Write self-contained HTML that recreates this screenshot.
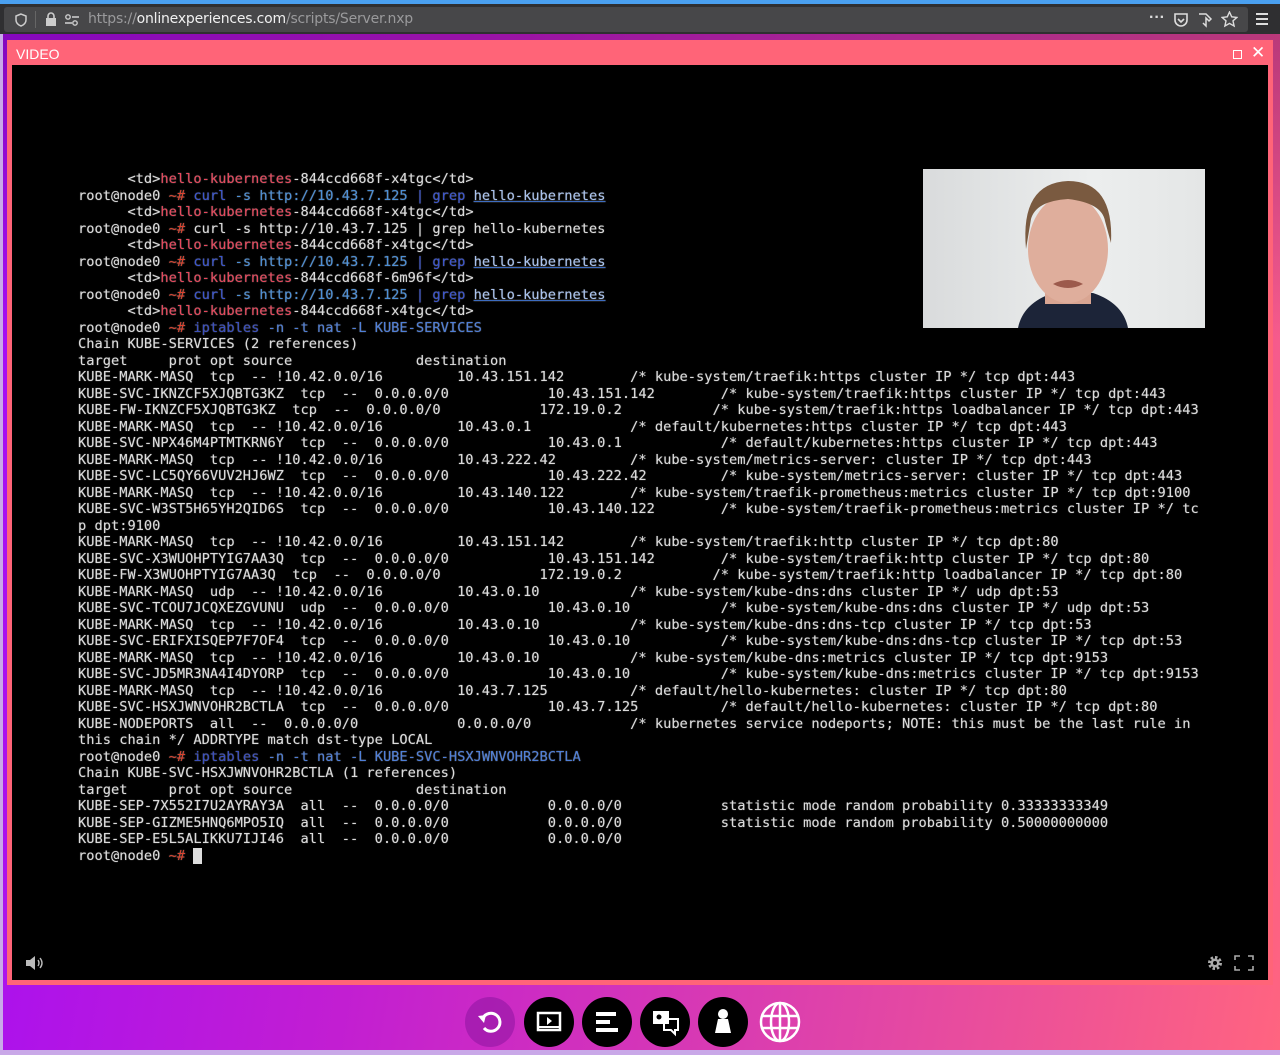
<!DOCTYPE html>
<html><head><meta charset="utf-8"><style>
*{margin:0;padding:0;box-sizing:border-box}
body{width:1280px;height:1055px;overflow:hidden;position:relative;background:#c9a8e8;font-family:"Liberation Sans","DejaVu Sans",sans-serif}
#top{position:absolute;left:0;top:0;width:1280px;height:4px;background:#4aa0f0}
#bar{position:absolute;left:0;top:4px;width:1280px;height:30px;background:#2f2f31}
#url{position:absolute;left:4px;top:3px;width:1244px;height:25px;background:#474749;border-radius:3px}
#url .t{position:absolute;left:84px;top:4px;font-size:14px;color:#9a9a9c;font-family:"DejaVu Sans",sans-serif;letter-spacing:-0.2px}
#url .t b{font-weight:normal;color:#f0f0f0}
#bg{position:absolute;left:3px;top:34px;width:1277px;height:1016px;background:linear-gradient(100deg,#a20cf8 0%,#c21ed2 35%,#e044a8 70%,#ff6480 100%)}
#bgshade{position:absolute;left:3px;top:34px;width:1277px;height:1016px;background:linear-gradient(180deg,rgba(80,0,80,0.35) 0%,rgba(0,0,0,0) 30%)}
#panel{position:absolute;left:7px;top:40px;width:1266px;height:945px;background:#ff6478}
#panel .h{position:absolute;left:9px;top:6px;color:#fff;font-size:14px}
#video{position:absolute;left:12px;top:65px;width:1256px;height:915px;background:#000}
pre{position:absolute;left:78px;top:171px;font-family:"DejaVu Sans Mono","Liberation Mono",monospace;font-size:13.7px;line-height:16.5px;color:#dcdcdc;text-shadow:0 0 1px rgba(220,220,220,.6)}
.r{color:#e8475c}.o{color:#d9432f}.b{color:#3a55d0}.c{color:#4c8fd6}.u{color:#a9c3ef;text-decoration:underline;text-decoration-color:#3d6cc0}
.d{color:#3a4fc0}.l{color:#4f7fd8}
#cam{position:absolute;left:923px;top:169px;width:282px;height:159px;background:linear-gradient(90deg,#d9dbdc,#eceeee 60%,#e4e6e6);overflow:hidden}
.icon{position:absolute;top:997px;width:50px;height:50px;border-radius:50%;background:#000}
</style></head><body>
<div id="top"></div>
<div id="bar"><div id="url">
<svg style="position:absolute;left:10px;top:6px" width="14" height="14" viewBox="0 0 14 14"><path d="M7 1L2 3v4c0 3 2.5 5 5 6 2.5-1 5-3 5-6V3z" fill="none" stroke="#ccc" stroke-width="1.5"/></svg>
<div style="position:absolute;left:31px;top:4px;width:1px;height:17px;background:#666"></div>
<svg style="position:absolute;left:41px;top:5px" width="12" height="15" viewBox="0 0 12 15"><rect x="1" y="6" width="10" height="8" fill="#ccc"/><path d="M3 6V4a3 3 0 016 0v2" fill="none" stroke="#ccc" stroke-width="1.6"/></svg>
<svg style="position:absolute;left:60px;top:6px" width="16" height="14" viewBox="0 0 16 14"><circle cx="4" cy="4" r="2.2" fill="none" stroke="#ccc" stroke-width="1.4"/><line x1="8" y1="4" x2="15" y2="4" stroke="#ccc" stroke-width="1.6"/><circle cx="11" cy="10" r="2.2" fill="none" stroke="#ccc" stroke-width="1.4"/><line x1="1" y1="10" x2="8" y2="10" stroke="#ccc" stroke-width="1.6"/></svg>
<div class="t">https://<b>onlinexperiences.com</b>/scripts/Server.nxp</div>
<div style="position:absolute;left:1145px;top:2px;color:#ddd;font-size:16px;font-weight:bold">···</div>
<svg style="position:absolute;left:1169px;top:5px" width="16" height="16" viewBox="0 0 16 16"><path d="M2 2h12v6a6 6 0 01-12 0z" fill="none" stroke="#ddd" stroke-width="1.6"/><path d="M5 7l3 3 3-3" fill="none" stroke="#ddd" stroke-width="1.6"/></svg>
<svg style="position:absolute;left:1193px;top:5px" width="16" height="16" viewBox="0 0 16 16"><path d="M2 2h7l5 5-2 2-3-3v8l-3-3" fill="none" stroke="#ddd" stroke-width="1.5"/></svg>
<svg style="position:absolute;left:1217px;top:4px" width="17" height="17" viewBox="0 0 17 17"><path d="M8.5 1l2.2 4.8 5.2.6-3.9 3.5 1.1 5.1-4.6-2.6-4.6 2.6 1.1-5.1L1.1 6.4l5.2-.6z" fill="none" stroke="#ddd" stroke-width="1.4"/></svg>
</div>
<div style="position:absolute;left:1256px;top:9px;width:12px;height:2px;background:#ddd;box-shadow:0 5px 0 #ddd,0 10px 0 #ddd"></div>
</div>
<div id="bg"></div><div id="bgshade"></div>
<div id="panel"><div class="h">VIDEO</div>
<div style="position:absolute;left:1226px;top:10px;width:9px;height:9px;border:1.5px solid #fff"></div>
<div style="position:absolute;left:1244px;top:3px;color:#fff;font-size:17px">✕</div>
</div>
<div id="video">
<svg style="position:absolute;left:13px;top:890px" width="20" height="16" viewBox="0 0 20 16"><path d="M1 5h4l5-4v14l-5-4H1z" fill="#bbb"/><path d="M13 5q2 3 0 6M15 3q4 5 0 10" fill="none" stroke="#bbb" stroke-width="1.4"/></svg>
<svg style="position:absolute;left:1194px;top:889px" width="18" height="18" viewBox="0 0 18 18"><circle cx="9" cy="9" r="5" fill="none" stroke="#aaa" stroke-width="4" stroke-dasharray="2.2 1.7"/><circle cx="9" cy="9" r="4.5" fill="#aaa"/><circle cx="9" cy="9" r="2" fill="#000"/></svg>
<svg style="position:absolute;left:1222px;top:890px" width="20" height="16" viewBox="0 0 20 16"><path d="M1 5V1h5M14 1h5v4M19 11v4h-5M6 15H1v-4" fill="none" stroke="#aaa" stroke-width="1.6"/></svg>
</div>
<pre>      &lt;td&gt;<span class="r">hello-kubernetes</span>-844ccd668f-x4tgc&lt;/td&gt;
root@node0 <span class="o">~#</span> <span class="b">curl</span> <span class="c">-s http://10.43.7.125</span> <span class="b">| grep</span> <span class="u">hello-kubernetes</span>
      &lt;td&gt;<span class="r">hello-kubernetes</span>-844ccd668f-x4tgc&lt;/td&gt;
root@node0 <span class="o">~#</span> curl -s http://10.43.7.125 | grep hello-kubernetes
      &lt;td&gt;<span class="r">hello-kubernetes</span>-844ccd668f-x4tgc&lt;/td&gt;
root@node0 <span class="o">~#</span> <span class="b">curl</span> <span class="c">-s http://10.43.7.125</span> <span class="b">| grep</span> <span class="u">hello-kubernetes</span>
      &lt;td&gt;<span class="r">hello-kubernetes</span>-844ccd668f-6m96f&lt;/td&gt;
root@node0 <span class="o">~#</span> <span class="b">curl</span> <span class="c">-s http://10.43.7.125</span> <span class="b">| grep</span> <span class="u">hello-kubernetes</span>
      &lt;td&gt;<span class="r">hello-kubernetes</span>-844ccd668f-x4tgc&lt;/td&gt;
root@node0 <span class="o">~#</span> <span class="d">iptables</span> <span class="l">-n -t nat -L KUBE-SERVICES</span>
Chain KUBE-SERVICES (2 references)
target     prot opt source               destination
KUBE-MARK-MASQ  tcp  -- !10.42.0.0/16         10.43.151.142        /* kube-system/traefik:https cluster IP */ tcp dpt:443
KUBE-SVC-IKNZCF5XJQBTG3KZ  tcp  --  0.0.0.0/0            10.43.151.142        /* kube-system/traefik:https cluster IP */ tcp dpt:443
KUBE-FW-IKNZCF5XJQBTG3KZ  tcp  --  0.0.0.0/0            172.19.0.2           /* kube-system/traefik:https loadbalancer IP */ tcp dpt:443
KUBE-MARK-MASQ  tcp  -- !10.42.0.0/16         10.43.0.1            /* default/kubernetes:https cluster IP */ tcp dpt:443
KUBE-SVC-NPX46M4PTMTKRN6Y  tcp  --  0.0.0.0/0            10.43.0.1            /* default/kubernetes:https cluster IP */ tcp dpt:443
KUBE-MARK-MASQ  tcp  -- !10.42.0.0/16         10.43.222.42         /* kube-system/metrics-server: cluster IP */ tcp dpt:443
KUBE-SVC-LC5QY66VUV2HJ6WZ  tcp  --  0.0.0.0/0            10.43.222.42         /* kube-system/metrics-server: cluster IP */ tcp dpt:443
KUBE-MARK-MASQ  tcp  -- !10.42.0.0/16         10.43.140.122        /* kube-system/traefik-prometheus:metrics cluster IP */ tcp dpt:9100
KUBE-SVC-W3ST5H65YH2QID6S  tcp  --  0.0.0.0/0            10.43.140.122        /* kube-system/traefik-prometheus:metrics cluster IP */ tc
p dpt:9100
KUBE-MARK-MASQ  tcp  -- !10.42.0.0/16         10.43.151.142        /* kube-system/traefik:http cluster IP */ tcp dpt:80
KUBE-SVC-X3WUOHPTYIG7AA3Q  tcp  --  0.0.0.0/0            10.43.151.142        /* kube-system/traefik:http cluster IP */ tcp dpt:80
KUBE-FW-X3WUOHPTYIG7AA3Q  tcp  --  0.0.0.0/0            172.19.0.2           /* kube-system/traefik:http loadbalancer IP */ tcp dpt:80
KUBE-MARK-MASQ  udp  -- !10.42.0.0/16         10.43.0.10           /* kube-system/kube-dns:dns cluster IP */ udp dpt:53
KUBE-SVC-TCOU7JCQXEZGVUNU  udp  --  0.0.0.0/0            10.43.0.10           /* kube-system/kube-dns:dns cluster IP */ udp dpt:53
KUBE-MARK-MASQ  tcp  -- !10.42.0.0/16         10.43.0.10           /* kube-system/kube-dns:dns-tcp cluster IP */ tcp dpt:53
KUBE-SVC-ERIFXISQEP7F7OF4  tcp  --  0.0.0.0/0            10.43.0.10           /* kube-system/kube-dns:dns-tcp cluster IP */ tcp dpt:53
KUBE-MARK-MASQ  tcp  -- !10.42.0.0/16         10.43.0.10           /* kube-system/kube-dns:metrics cluster IP */ tcp dpt:9153
KUBE-SVC-JD5MR3NA4I4DYORP  tcp  --  0.0.0.0/0            10.43.0.10           /* kube-system/kube-dns:metrics cluster IP */ tcp dpt:9153
KUBE-MARK-MASQ  tcp  -- !10.42.0.0/16         10.43.7.125          /* default/hello-kubernetes: cluster IP */ tcp dpt:80
KUBE-SVC-HSXJWNVOHR2BCTLA  tcp  --  0.0.0.0/0            10.43.7.125          /* default/hello-kubernetes: cluster IP */ tcp dpt:80
KUBE-NODEPORTS  all  --  0.0.0.0/0            0.0.0.0/0            /* kubernetes service nodeports; NOTE: this must be the last rule in
this chain */ ADDRTYPE match dst-type LOCAL
root@node0 <span class="o">~#</span> <span class="d">iptables</span> <span class="l">-n -t nat -L KUBE-SVC-HSXJWNVOHR2BCTLA</span>
Chain KUBE-SVC-HSXJWNVOHR2BCTLA (1 references)
target     prot opt source               destination
KUBE-SEP-7X552I7U2AYRAY3A  all  --  0.0.0.0/0            0.0.0.0/0            statistic mode random probability 0.33333333349
KUBE-SEP-GIZME5HNQ6MPO5IQ  all  --  0.0.0.0/0            0.0.0.0/0            statistic mode random probability 0.50000000000
KUBE-SEP-E5L5ALIKKU7IJI46  all  --  0.0.0.0/0            0.0.0.0/0
root@node0 <span class="o">~#</span> <span style="background:#ddd">&#160;</span></pre>
<div id="cam">
<svg width="282" height="159" viewBox="0 0 282 159">
<path d="M95 159q5-25 35-35l40 0q30 10 35 35z" fill="#1c2438"/>
<rect x="122" y="100" width="46" height="35" fill="#d9a592"/>
<ellipse cx="145" cy="80" rx="40" ry="54" fill="#dfae9c"/>
<path d="M103 80q-6-66 42-68 46 0 43 62l-6-22q-3-18-37-22-32 2-37 20z" fill="#7a5a40"/>
<path d="M130 115q15-8 30 0q-15 8-30 0z" fill="#9c5a4c"/>
</svg></div>
<div class="icon" style="left:465px;background:rgba(140,20,160,0.55)"><svg width="50" height="50" viewBox="0 0 50 50"><path d="M18 21a9 9 0 1 1 1 10" fill="none" stroke="#fff" stroke-width="3"/><path d="M13 19l8-1-2 8z" fill="#fff"/></svg></div>
<div class="icon" style="left:524px"><svg width="50" height="50" viewBox="0 0 50 50"><rect x="14" y="16" width="22" height="17" fill="none" stroke="#fff" stroke-width="2.5"/><line x1="14" y1="30" x2="36" y2="30" stroke="#fff" stroke-width="2"/><path d="M23 20l5 4-5 4z" fill="#fff"/></svg></div>
<div class="icon" style="left:582px"><svg width="50" height="50" viewBox="0 0 50 50"><rect x="14" y="15" width="20" height="4" fill="#fff"/><rect x="14" y="23" width="14" height="4" fill="#fff"/><rect x="14" y="31" width="22" height="4" fill="#fff"/></svg></div>
<div class="icon" style="left:640px"><svg width="50" height="50" viewBox="0 0 50 50"><rect x="13" y="14" width="16" height="13" fill="#fff"/><path d="M24 22h14v11h-3v4l-4-4h-7z" fill="none" stroke="#fff" stroke-width="2"/><circle cx="19" cy="20" r="2.5" fill="#000"/></svg></div>
<div class="icon" style="left:698px"><svg width="50" height="50" viewBox="0 0 50 50"><circle cx="25" cy="17" r="5" fill="#fff"/><path d="M20 22h10l3 14H17z" fill="#fff"/></svg></div>
<svg style="position:absolute;left:758px;top:998px" width="46" height="48" viewBox="0 0 46 48"><circle cx="22" cy="24" r="19" fill="none" stroke="#fff" stroke-width="2.5"/><ellipse cx="22" cy="24" rx="9" ry="19" fill="none" stroke="#fff" stroke-width="2.5"/><line x1="22" y1="5" x2="22" y2="43" stroke="#fff" stroke-width="2.5"/><line x1="4" y1="18" x2="40" y2="18" stroke="#fff" stroke-width="2.5"/><line x1="4" y1="30" x2="40" y2="30" stroke="#fff" stroke-width="2.5"/></svg>
</body></html>
